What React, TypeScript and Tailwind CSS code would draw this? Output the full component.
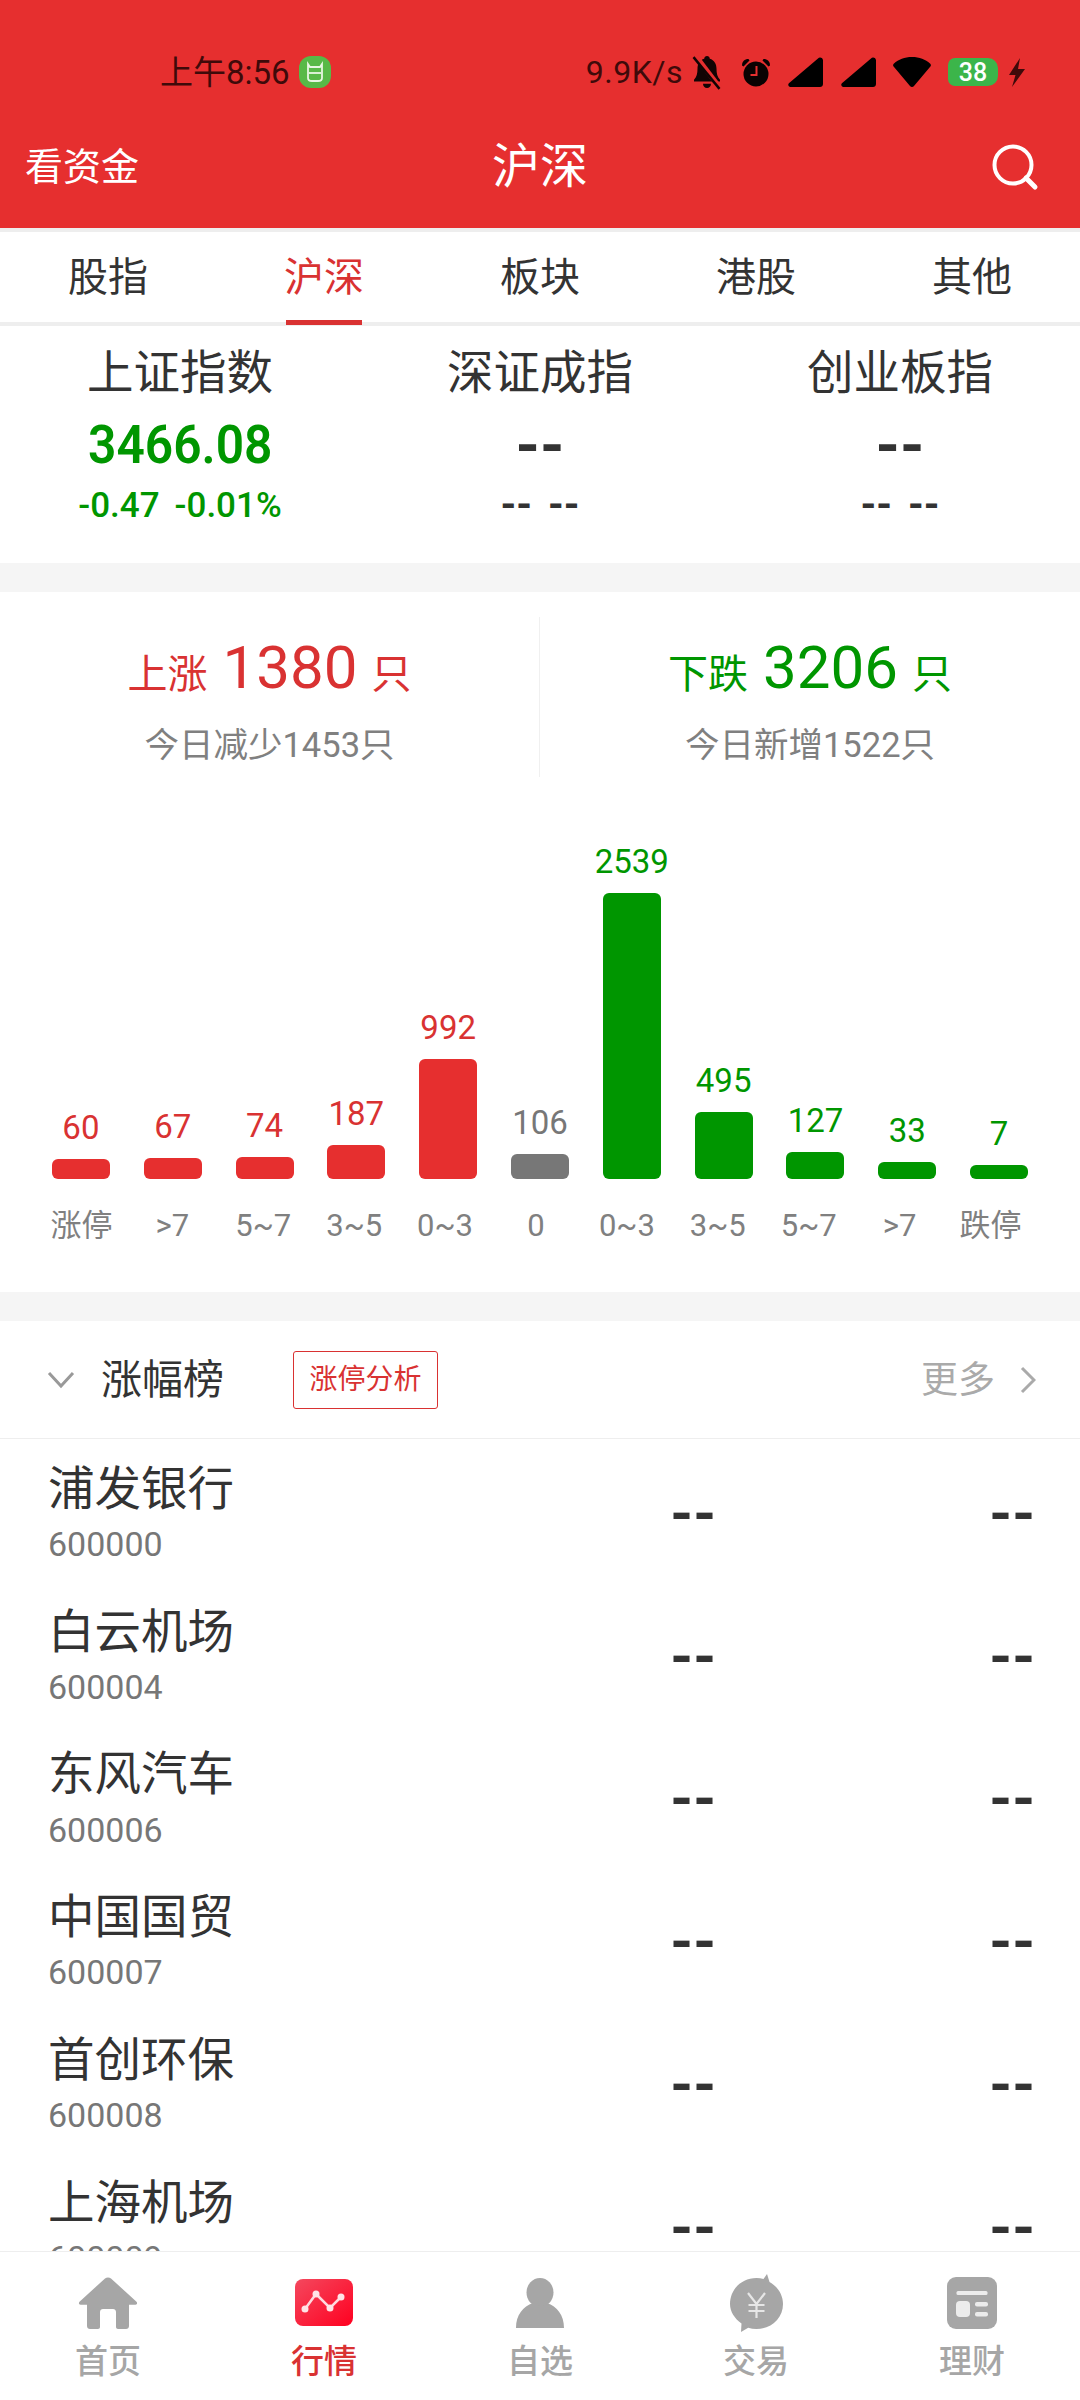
import React from 'react'

const FONT = 'font-[Roboto,"Noto_Sans_CJK_SC",sans-serif]'

const tabs = ['股指', '沪深', '板块', '港股', '其他']

const bars = [
  { value: 60, h: 20, color: 'red', label: '涨停' },
  { value: 67, h: 21, color: 'red', label: '>7' },
  { value: 74, h: 22, color: 'red', label: '5~7' },
  { value: 187, h: 34, color: 'red', label: '3~5' },
  { value: 992, h: 120, color: 'red', label: '0~3' },
  { value: 106, h: 25, color: 'gray', label: '0' },
  { value: 2539, h: 286, color: 'green', label: '0~3' },
  { value: 495, h: 67, color: 'green', label: '3~5' },
  { value: 127, h: 27, color: 'green', label: '5~7' },
  { value: 33, h: 17, color: 'green', label: '>7' },
  { value: 7, h: 14, color: 'green', label: '跌停' },
]

const barBg: Record<string, string> = {
  red: 'bg-[#e62f2f]',
  gray: 'bg-[#777777]',
  green: 'bg-[#009600]',
}

const barText: Record<string, string> = {
  red: 'text-[#d93232]',
  gray: 'text-[#777777]',
  green: 'text-[#009600]',
}

const stocks = [
  { name: '浦发银行', code: '600000' },
  { name: '白云机场', code: '600004' },
  { name: '东风汽车', code: '600006' },
  { name: '中国国贸', code: '600007' },
  { name: '首创环保', code: '600008' },
  { name: '上海机场', code: '600009' },
]

const StatusIcons = () => (
  <div className="flex items-center">
    <span className="text-[32px] leading-none text-[#3f0a0a] tracking-[0.5px]">9.9K/s</span>
    {/* 静音 */}
    <svg className="ml-[9px]" width="30" height="36" viewBox="0 0 30 34" preserveAspectRatio="none">
      <path d="M15 2c1.600 0 2.600 1 2.800 2.400 4.400 1.200 6.700 4.800 6.700 9.600 0 4.600.8 7.400 3.500 10.400V26H2v-1.600c2.700-3 3.500-5.800 3.500-10.400 0-4.800 2.300-8.400 6.700-9.600C12.400 3 13.400 2 15 2z" fill="#120404" />
      <path d="M11 28h8c0 2.400-1.700 4-4 4s-4-1.600-4-4z" fill="#120404" />
      <path d="M3 1l25 31" stroke="#e62f2f" strokeWidth="5" />
      <path d="M1.500 3l26 30" stroke="#120404" strokeWidth="2.500" />
    </svg>
    {/* 闹钟 */}
    <svg className="ml-[19px]" width="30" height="30" viewBox="0 0 30 30">
      <circle cx="15" cy="17" r="12.500" fill="#0a0202" />
      <path d="M1 8.500C1 4.500 3.500 2 7.500 2L8.500 3.500 2.500 9.500z" fill="#0a0202" />
      <path d="M29 8.500C29 4.500 26.500 2 22.500 2L21.500 3.500 27.500 9.500z" fill="#0a0202" />
      <path d="M15.500 9v9H9.500" stroke="#e62f2f" strokeWidth="2" fill="none" />
    </svg>
    {/* 信号 */}
    <svg className="ml-[17px]" width="35" height="30" viewBox="0 0 35 30">
      <path d="M32 0.500c1.700 0 3 1.300 3 3V27c0 1.700-1.300 3-3 3H2.500c-2 0-3-2.200-1.600-3.700L30 1.500c.6-.6 1.200-1 2-1z" fill="#000" />
    </svg>
    <svg className="ml-[18px]" width="35" height="30" viewBox="0 0 35 30">
      <path d="M32 0.500c1.700 0 3 1.300 3 3V27c0 1.700-1.300 3-3 3H2.500c-2 0-3-2.200-1.600-3.700L30 1.500c.6-.6 1.200-1 2-1z" fill="#000" />
    </svg>
    {/* wifi */}
    <svg className="ml-[17px]" width="38" height="30" viewBox="0 0 38 30">
      <path d="M19 0C11.500 0 5.500 2.500 1 6.500c-1 .9-1.200 2-.4 3L17 29c1 1.300 3 1.300 4 0L37.400 9.500c.8-1 .6-2.100-.4-3C32.500 2.500 26.500 0 19 0z" fill="#000" />
    </svg>
    {/* 电量 */}
    <div className="ml-[17px] w-[50px] h-[28px] bg-[#3cb54a] rounded-l-[7px] rounded-r-[10px] flex items-center justify-center text-white text-[25px] font-medium leading-none">
      38
    </div>
    <svg className="ml-[10px]" width="18" height="29" viewBox="0 0 18 29">
      <path d="M12 0L1 17h6.500L4 29l13-18H10z" fill="#3f0a0a" />
    </svg>
  </div>
)

const Dashes = ({ className = '' }: { className?: string }) => (
  <span className={`font-bold leading-none text-[#333333] ${className}`}>--</span>
)

const NavIcon = ({ name }: { name: string }) => {
  if (name === 'home') {
    return (
      <svg width="60" height="52" viewBox="0 0 60 52">
        <path d="M27 1.500c1.700-1.500 4.300-1.500 6 0l25.500 23.200c1.200 1.100.5 3-1.100 3H51V49c0 1.700-1.300 3-3 3h-8c-1.100 0-2-.9-2-2V35c0-1.700-1.300-3-3-3H25c-1.700 0-3 1.300-3 3v15c0 1.100-.9 2-2 2h-8c-1.700 0-3-1.300-3-3V27.700H2.600c-1.600 0-2.300-1.900-1.100-3z" fill="#a6a6a6" />
      </svg>
    )
  }
  if (name === 'market') {
    return (
      <svg width="58" height="48" viewBox="0 0 58 48">
        <defs>
          <linearGradient id="marketFill" x1="0" y1="0" x2="1" y2="1">
            <stop offset="0" stopColor="#f4485e" />
            <stop offset="1" stopColor="#ff0020" />
          </linearGradient>
        </defs>
        <rect width="58" height="47" rx="8" fill="url(#marketFill)" />
        <path d="M10 30L21 15L35 29L46 18" stroke="#ffd9de" strokeWidth="2.500" fill="none" />
        <circle cx="10" cy="30" r="3.500" fill="#ffe4e7" />
        <circle cx="21" cy="15" r="3.500" fill="#ffe4e7" />
        <circle cx="35" cy="29" r="3.500" fill="#ffe4e7" />
        <circle cx="46" cy="18" r="3.500" fill="#ffe4e7" />
      </svg>
    )
  }
  if (name === 'user') {
    return (
      <svg width="48" height="50" viewBox="0 0 48 50">
        <ellipse cx="24" cy="14.500" rx="13.500" ry="14.500" fill="#a6a6a6" />
        <path d="M17 25c4 3.500 10 3.500 14 0 10 3.500 17 12 17 25H0C0 37 7 28.500 17 25z" fill="#a6a6a6" />
      </svg>
    )
  }
  if (name === 'trade') {
    return (
      <svg width="53" height="58" viewBox="0 0 53 58">
        <path d="M26.500 4c2.500 0 4.800.3 7 1L37 0l2.500 8C47.500 12.500 53 20.500 53 30c0 14-11.500 25-26.500 25-3 0-5.700-.4-8.300-1.200L11 58l.5-8.500C4.500 44.500 0 37.500 0 30 0 15.500 11.500 4 26.500 4z" fill="#a6a6a6" />
        <path d="M18 19l8.500 11L35 19M26.500 30v14M18.500 31h16M18.500 37h16" stroke="#e6e6e6" strokeWidth="2.200" fill="none" />
      </svg>
    )
  }
  return (
    <svg width="50" height="52" viewBox="0 0 50 52">
      <rect width="50" height="52" rx="9" fill="#a6a6a6" />
      <rect x="9.500" y="14" width="31" height="4" rx="1.500" fill="#ececec" />
      <rect x="9" y="24" width="14" height="16" rx="4" fill="#ececec" />
      <rect x="28" y="25" width="13" height="4.500" rx="2" fill="#ececec" />
      <rect x="28" y="35" width="13" height="4.500" rx="2" fill="#ececec" />
    </svg>
  )
}

const navItems = [
  { icon: 'home', label: '首页' },
  { icon: 'market', label: '行情', active: true },
  { icon: 'user', label: '自选' },
  { icon: 'trade', label: '交易' },
  { icon: 'wealth', label: '理财' },
]

export default function App() {
  return (
    <div className={`w-[1080px] h-[2400px] flex flex-col overflow-hidden bg-white text-[#333333] ${FONT}`}>
      {/* 顶部红色区域 */}
      <div className="bg-[#e62f2f] shrink-0 h-[228px] pt-[38px]">
        <div className="h-[68px] flex items-center justify-between pl-[160px] pr-[54px]">
          <div className="flex items-center">
            <span className="text-[33px] leading-none text-[#3f0a0a]">上午8:56</span>
            <div className="ml-[9px] w-[32px] h-[32px] rounded-[12px] bg-[#58b947] flex items-center justify-center">
              <svg width="20" height="22" viewBox="0 0 20 22">
                <path d="M3 3l2 3h10l2-3v14c0 2-2 3-4 3H7c-2 0-4-1-4-3z" fill="none" stroke="#e8f6e2" strokeWidth="1.800" />
                <path d="M4 12h12" stroke="#e8f6e2" strokeWidth="1.800" />
              </svg>
            </div>
          </div>
          <StatusIcons />
        </div>
        <div className="h-[122px] grid grid-cols-3 items-center">
          <div className="pl-[25px] text-[38px] leading-none text-white">看资金</div>
          <div className="text-center text-[48px] leading-none text-white">沪深</div>
          <div className="flex justify-end pr-[41px]">
            <svg width="48" height="48" viewBox="0 0 48 48" fill="none">
              <circle cx="22" cy="22" r="18.500" stroke="#fff" strokeWidth="4" />
              <path d="M35 35l9 9" stroke="#fff" strokeWidth="5" strokeLinecap="round" />
            </svg>
          </div>
        </div>
      </div>

      {/* 分类标签 */}
      <div className="shrink-0 h-[98px] box-border border-y-[4px] border-[#eeeeee] grid grid-cols-5">
        {tabs.map((tab, i) => (
          <div
            key={tab}
            className={`relative flex items-center justify-center pt-[2px] text-[40px] leading-none ${i === 1 ? 'text-[#d93232]' : 'text-[#333333]'}`}
          >
            {tab}
            {i === 1 && <div className="absolute left-[70px] bottom-[-3px] w-[76px] h-[5px] bg-[#d93232]" />}
          </div>
        ))}
      </div>

      {/* 指数 */}
      <div className="shrink-0 h-[237px] pt-[17px] grid grid-cols-3">
        <div className="flex flex-col items-center">
          <div className="h-[60px] flex items-center text-[46.500px] leading-none">上证指数</div>
          <div className="mt-[12px] h-[60px] flex items-center text-[54px] leading-none font-semibold text-[#009600] scale-x-[0.92]">3466.08</div>
          <div className="mt-[10px] h-[40px] flex items-center text-[35px] leading-none font-medium text-[#009600]">
            <span>-0.47</span>
            <span className="ml-[15px]">-0.01%</span>
          </div>
        </div>
        {['深证成指', '创业板指'].map((name) => (
          <div key={name} className="flex flex-col items-center">
            <div className="h-[60px] flex items-center text-[46.500px] leading-none">{name}</div>
            <div className="mt-[12px] h-[60px] flex items-center">
              <Dashes className="text-[62px]" />
            </div>
            <div className="mt-[10px] h-[40px] flex items-center">
              <Dashes className="text-[40px]" />
              <Dashes className="text-[40px] ml-[16px]" />
            </div>
          </div>
        ))}
      </div>

      <div className="shrink-0 h-[29px] bg-[#f5f5f5]" />

      {/* 涨跌家数 */}
      <div className="shrink-0 pt-[25px] grid grid-cols-2">
        <div className="h-[160px] pt-[11px] border-r border-[#f0f0f0] flex flex-col items-center">
          <div className="h-[80px] flex items-baseline text-[#d93232]">
            <span className="text-[40px]">上涨</span>
            <span className="ml-[15px] text-[60px] leading-[80px]">1380</span>
            <span className="ml-[14px] text-[40px]">只</span>
          </div>
          <div className="mt-[13px] h-[50px] flex items-center text-[34.500px] text-[#808080]">今日减少1453只</div>
        </div>
        <div className="h-[160px] pt-[11px] flex flex-col items-center">
          <div className="h-[80px] flex items-baseline text-[#009600]">
            <span className="text-[40px]">下跌</span>
            <span className="ml-[15px] text-[60px] leading-[80px]">3206</span>
            <span className="ml-[14px] text-[40px]">只</span>
          </div>
          <div className="mt-[13px] h-[50px] flex items-center text-[34.500px] text-[#808080]">今日新增1522只</div>
        </div>
      </div>

      {/* 涨跌分布柱状图 */}
      <div className="shrink-0 h-[515px]">
        <div className="h-[402px] px-[35px] grid grid-cols-11">
          {bars.map((bar, i) => (
            <div key={i} className="flex flex-col items-center justify-end">
              <div className={`h-[36px] mb-[14px] flex items-center text-[33px] leading-none ${barText[bar.color]}`}>
                {bar.value}
              </div>
              <div className={`w-[58px] rounded-[6px] ${barBg[bar.color]}`} style={{ height: bar.h }} />
            </div>
          ))}
        </div>
        <div className="mt-[26px] h-[40px] pl-[36px] pr-[44px] grid grid-cols-11">
          {bars.map((bar, i) => (
            <div key={i} className="flex items-center justify-center text-[31px] leading-none text-[#808080]">
              {bar.label}
            </div>
          ))}
        </div>
      </div>

      <div className="shrink-0 h-[29px] bg-[#f5f5f5]" />

      {/* 涨幅榜 */}
      <div className="shrink-0 h-[118px] box-border border-b border-[#eeeeee] flex items-center pl-[47px] pr-[44px]">
        <svg width="28" height="18" viewBox="0 0 28 18" fill="none">
          <path d="M2 2l12 13L26 2" stroke="#999999" strokeWidth="3" />
        </svg>
        <div className="ml-[26px] pt-[2px] text-[41px] leading-none">涨幅榜</div>
        <div className="ml-[69px] w-[145px] h-[58px] box-border border border-[#d93232] rounded-[3px] flex items-center justify-center text-[28px] leading-none text-[#d93232]">
          涨停分析
        </div>
        <div className="ml-auto pt-[2px] text-[37px] leading-none text-[#aaaaaa]">更多</div>
        <svg className="ml-[25px]" width="16" height="28" viewBox="0 0 16 28" fill="none">
          <path d="M2 2l12 12L2 26" stroke="#aaaaaa" strokeWidth="3" />
        </svg>
      </div>

      <div className="flex-1 min-h-0 overflow-hidden">
        {stocks.map((stock) => (
          <div key={stock.code} className="h-[142.8px] pl-[48px] pr-[45px] flex items-start">
            <div className="flex-1 pt-[20px]">
              <div className="h-[60px] flex items-center text-[46.500px] leading-none">{stock.name}</div>
              <div className="mt-[5px] h-[40px] flex items-center text-[34px] leading-none text-[#777777]">
                {stock.code}
              </div>
            </div>
            <div className="w-[120px] h-[142.8px] flex items-center justify-end pt-[5px]">
              <Dashes className="text-[58px]" />
            </div>
            <div className="w-[319px] h-[142.8px] flex items-center justify-end pt-[5px]">
              <Dashes className="text-[58px]" />
            </div>
          </div>
        ))}
      </div>

      {/* 底部导航 */}
      <div className="shrink-0 h-[149px] box-border border-t border-[#eeeeee] bg-white grid grid-cols-5 pt-[22px]">
        {navItems.map((item) => (
          <div key={item.label} className="flex flex-col items-center">
            <div className="h-[58px] flex items-center justify-center">
              <NavIcon name={item.icon} />
            </div>
            <div className={`mt-[9px] h-[40px] flex items-center text-[33px] leading-none font-medium ${item.active ? 'text-[#d93232]' : 'text-[#a6a6a6]'}`}>
              {item.label}
            </div>
          </div>
        ))}
      </div>
    </div>
  )
}
